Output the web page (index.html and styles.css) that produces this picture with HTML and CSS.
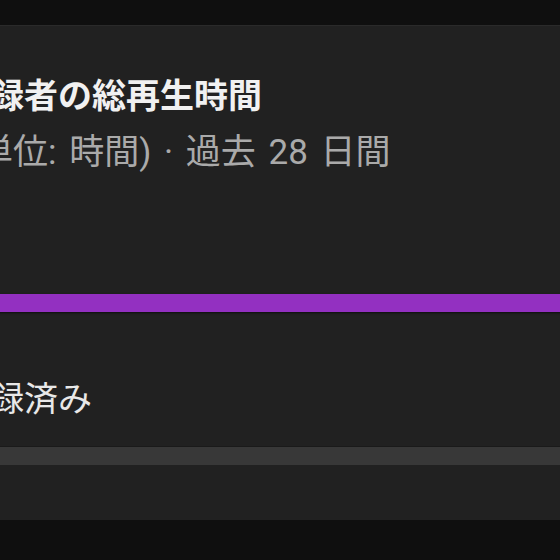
FILE: index.html
```html
<!DOCTYPE html>
<html lang="ja">
<head>
  <meta charset="UTF-8">
  <meta name="viewport" content="width=device-width, initial-scale=1.0">
  <title>登録者の総再生時間</title>
  <link rel="stylesheet" href="styles.css">
</head>
<body>
  <div class="card">
    <h2 class="title">登録者の総再生時間</h2>
    <p class="subtitle">(単位: 時間) · 過去 28 日間</p>

    <!-- Subscriber share bar -->
    <div class="bar bar-main"></div>

    <p class="legend">登録済み</p>

    <div class="bar bar-track"></div>
  </div>
</body>
</html>
```

FILE: styles.css
```css
/* General Styles */
body {
  margin: 0;
  padding: 25px 0 0;
  background-color: #0f0f0f;
  font-family: Roboto, "Noto Sans CJK JP", sans-serif;
  overflow: hidden;
  height: 560px;
  box-sizing: border-box;
}

/* Card */
.card {
  background-color: #212121;
  border-top: 1px solid #2a2a2a;
  height: 495px;
  margin-left: -80px;
  width: 720px;
  padding: 50px 0 0 36px;
  box-sizing: border-box;
}

.title {
  margin: 0;
  font-size: 34px;
  line-height: 40px;
  font-weight: bold;
  color: #f1f1f1;
  white-space: nowrap;
}

.subtitle {
  margin: 17px 0 0 10px;
  font-size: 35px;
  line-height: 40px;
  color: #aaaaaa;
  white-space: nowrap;
  word-spacing: 4px;
  font-feature-settings: "palt";
}

/* Bars */
.bar {
  height: 18px;
  margin-left: -36px;
}

.bar-main {
  margin-top: 121px;
  background-color: #9330c1;
  box-shadow: 0 1px 2px rgba(0, 0, 0, 0.6);
}

.bar-track {
  margin-top: 27px;
  background-color: #383838;
  border-top: 1px solid #1a1a1a;
}

.legend {
  margin: 67px 0 0;
  font-size: 34px;
  line-height: 40px;
  color: #e8e8e8;
  white-space: nowrap;
}
```
